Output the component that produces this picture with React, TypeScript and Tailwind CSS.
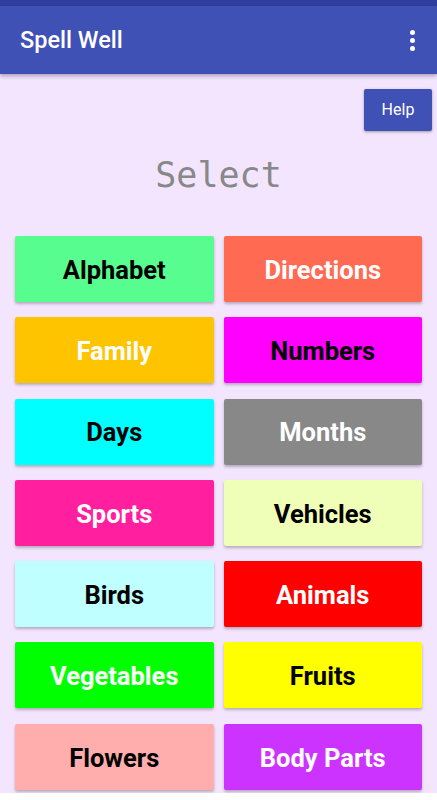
const categories = [
  { label: 'Alphabet', bg: 'bg-[#58fd8f]', fg: 'text-black' },
  { label: 'Directions', bg: 'bg-[#ff6a52]', fg: 'text-white' },
  { label: 'Family', bg: 'bg-[#ffc400]', fg: 'text-white' },
  { label: 'Numbers', bg: 'bg-[#ff00ff]', fg: 'text-black' },
  { label: 'Days', bg: 'bg-[#00ffff]', fg: 'text-black' },
  { label: 'Months', bg: 'bg-[#888888]', fg: 'text-white' },
  { label: 'Sports', bg: 'bg-[#ff1f9f]', fg: 'text-white' },
  { label: 'Vehicles', bg: 'bg-[#f0ffb8]', fg: 'text-black' },
  { label: 'Birds', bg: 'bg-[#c0ffff]', fg: 'text-black' },
  { label: 'Animals', bg: 'bg-[#ff0000]', fg: 'text-white' },
  { label: 'Vegetables', bg: 'bg-[#00ff00]', fg: 'text-white' },
  { label: 'Fruits', bg: 'bg-[#ffff00]', fg: 'text-black' },
  { label: 'Flowers', bg: 'bg-[#ffadad]', fg: 'text-black' },
  { label: 'Body Parts', bg: 'bg-[#cc33ff]', fg: 'text-white' },
];

export default function App() {
  return (
    <div className="w-[437px] bg-white font-['Roboto','Liberation_Sans',sans-serif]">
      {/* status bar */}
      <div className="h-[6px] bg-[#303f9f]" />

      {/* toolbar */}
      <header className="relative z-10 flex h-[68px] items-center justify-between bg-[#3f51b5] pl-5 pr-[22px] shadow-[0_2px_4px_rgba(0,0,0,0.3)]">
        <h1 className="pt-[2px] text-[23.5px] font-medium text-white">Spell Well</h1>
        <div className="flex flex-col items-center gap-[3px]">
          <span className="h-[5px] w-[5px] rounded-full bg-white" />
          <span className="h-[5px] w-[5px] rounded-full bg-white" />
          <span className="h-[5px] w-[5px] rounded-full bg-white" />
        </div>
      </header>

      <main className="bg-[#f3e5fd] pb-[3px]">
        <div className="flex justify-end pr-[5px] pt-[15px]">
          <button className="h-[42px] w-[68px] rounded-[2px] bg-[#3f51b5] text-[16px] text-white shadow-[0_1px_3px_rgba(0,0,0,0.35)]">
            Help
          </button>
        </div>

        <div className="mt-[14px] flex h-[60px] items-center justify-center font-['DejaVu_Sans_Mono',monospace] text-[35px] text-[#888888]">
          Select
        </div>

        <div className="mt-[31px] grid grid-cols-2 gap-x-[10px] gap-y-[15.3px] px-[15px]">
          {categories.map((c) => (
            <button
              key={c.label}
              className={`flex h-[66px] items-center justify-center rounded-[2px] pt-[2px] text-[25.5px] font-bold shadow-[0_2px_3px_rgba(0,0,0,0.25)] ${c.bg} ${c.fg}`}
            >
              {c.label}
            </button>
          ))}
        </div>
      </main>
    </div>
  );
}
